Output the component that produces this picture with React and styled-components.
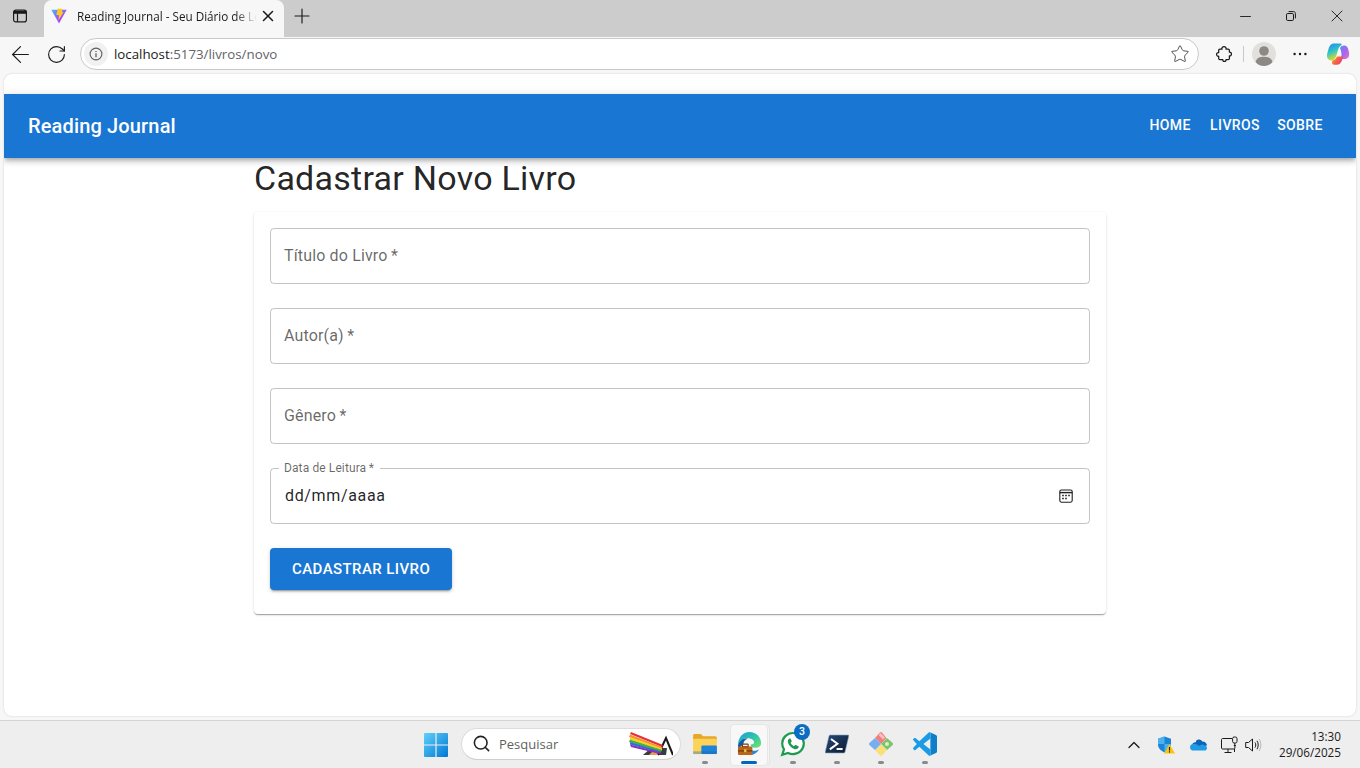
import React from 'react'
import styled, { createGlobalStyle } from 'styled-components'
import { ArrowLeft, RotateCw, Star, Minus, X, Plus, Search, ChevronUp } from 'lucide-react'

const GlobalStyle = createGlobalStyle`
    html, body { margin: 0; padding: 0; height: 100%; overflow: hidden; }
    body { font-family: Roboto, "Liberation Sans", sans-serif; background: #f7f7f7; }
    * { box-sizing: border-box; }
`

const fields = ['Título do Livro', 'Autor(a)', 'Gênero']
const navLinks = ['Home', 'Livros', 'Sobre']

const ViteIcon = () => (
    <svg width="16" height="16" viewBox="0 0 16 16">
        <defs>
            <linearGradient id="vite-a" x1="0" y1="0" x2="1" y2="1">
                <stop offset="0" stopColor="#41b8ff" />
                <stop offset="0.6" stopColor="#a24bfa" />
                <stop offset="1" stopColor="#bd34fe" />
            </linearGradient>
        </defs>
        <path d="M0.3 1.8 L15.7 1.8 L8 15.5 Z" fill="url(#vite-a)" />
        <path d="M7 0.5 L12 1 L10.8 4 L12.6 4 L7.4 12.5 L8 7.2 L5.2 6.8 Z" fill="#ffc81f" />
    </svg>
)

const SidebarIcon = () => (
    <svg width="16" height="16" viewBox="0 0 16 16" fill="none" stroke="#1a1a1a" strokeWidth="1.2">
        <rect x="1.6" y="2.1" width="12.8" height="11.8" rx="2.2" />
        <path d="M1.6 5.2 H14.4" />
        <path d="M5.5 5.2 V13.9" />
        <path d="M2 3 H14 V5 H2 Z" fill="#1a1a1a" stroke="none" />
    </svg>
)

const RestoreIcon = () => (
    <svg width="10" height="10" viewBox="0 0 10 10" fill="none" stroke="#1a1a1a" strokeWidth="1">
        <rect x="0.5" y="2.5" width="7" height="7" rx="1.3" />
        <path d="M2.6 0.6 H7.6 C8.6 0.6 9.4 1.4 9.4 2.4 V7.4" />
    </svg>
)

const InfoIcon = () => (
    <svg width="14" height="14" viewBox="0 0 14 14" fill="none" stroke="#5f5f5f" strokeWidth="1.1">
        <circle cx="7" cy="7" r="5.9" />
        <path d="M7 6.2 V10.2" strokeWidth="1.3" />
        <path d="M7 3.9 V5" strokeWidth="1.3" />
    </svg>
)

const PuzzleIcon = () => (
    <svg width="16" height="16" viewBox="0 0 16 16" fill="none" stroke="#1a1a1a" strokeWidth="1.25" strokeLinejoin="round">
        <path d="M6 3.2 C5.6 1.8 6.6 .7 8 .7 C9.4 .7 10.4 1.8 10 3.2 H12.2 C12.9 3.2 13.4 3.7 13.4 4.4 V6.2 C14.6 5.9 15.4 6.8 15.4 8 C15.4 9.2 14.6 10.1 13.4 9.8 V12.4 C13.4 13.1 12.9 13.6 12.2 13.6 H10 C10.2 14.8 9.4 15.4 8.4 15.4 C7.4 15.4 6.6 14.8 6.8 13.6 H3.9 C3.2 13.6 2.7 13.1 2.7 12.4 V10.2 C1.5 10.5 .6 9.6 .6 8.4 C.6 7.2 1.5 6.3 2.7 6.6 V4.4 C2.7 3.7 3.2 3.2 3.9 3.2 Z" />
    </svg>
)

const AvatarIcon = () => (
    <svg width="24" height="24" viewBox="0 0 24 24">
        <circle cx="12" cy="12" r="12" fill="#e2e0dd" />
        <circle cx="12" cy="9" r="4.8" fill="#8c8985" />
        <path d="M3.6 20 C4.4 16 8 14.8 12 14.8 C16 14.8 19.6 16 20.4 20 C18.4 22.6 15.4 24 12 24 C8.6 24 5.6 22.6 3.6 20 Z" fill="#8c8985" />
    </svg>
)

const DotsIcon = () => (
    <svg width="16" height="16" viewBox="0 0 16 16" fill="#1a1a1a">
        <circle cx="2.6" cy="8" r="1.2" />
        <circle cx="8" cy="8" r="1.2" />
        <circle cx="13.4" cy="8" r="1.2" />
    </svg>
)

const CopilotIcon = () => (
    <svg width="24" height="24" viewBox="0 0 24 24">
        <defs>
            <linearGradient id="cop-a" x1="0.2" y1="0" x2="0.6" y2="1">
                <stop offset="0" stopColor="#1f8df0" />
                <stop offset="0.45" stopColor="#2fc4c8" />
                <stop offset="0.8" stopColor="#b5d94a" />
                <stop offset="1" stopColor="#ffc83d" />
            </linearGradient>
            <linearGradient id="cop-b" x1="0" y1="0" x2="1" y2="1">
                <stop offset="0" stopColor="#5a8cf5" />
                <stop offset="0.5" stopColor="#a467f0" />
                <stop offset="1" stopColor="#ee6fc0" />
            </linearGradient>
            <linearGradient id="cop-c" x1="0" y1="0" x2="1" y2="0.6">
                <stop offset="0" stopColor="#ffb52e" />
                <stop offset="0.55" stopColor="#f5603c" />
                <stop offset="1" stopColor="#e8408a" />
            </linearGradient>
        </defs>
        <path d="M8 1.5 H14.5 C15.5 1.5 16 2.5 15.4 3.2 C13.6 4 12.6 5.6 12 8 L10.4 13.4 C9.6 16 8.4 18 5.8 18.4 C3 18.6 1 17 1 14 C1 12 1.6 9.8 2.4 7.4 C3.4 3.8 5 1.5 8 1.5 Z" fill="url(#cop-a)" />
        <path d="M14 6 C15 4.4 16.4 3.6 18.2 3.6 C20.6 3.6 21.8 5.4 22.4 8 C23.2 10.6 23.4 12.6 22.8 14.4 C22 16.4 20 17 18 17 H13.4 C15.4 16 15.8 13.4 15.4 11 C15.1 9.2 14.6 7.4 14 6 Z" fill="url(#cop-b)" />
        <path d="M6.4 18.6 C8.6 18.2 10 16.8 11 14.6 H17 C16.6 17.6 15.4 20.4 13.8 21.8 C12.8 22.6 11.6 22.8 10.4 22.8 H8.4 C6.8 22.8 6 21.8 6 20.8 Z" fill="url(#cop-c)" />
    </svg>
)

const CalendarIcon = () => (
    <svg width="14" height="14" viewBox="0 0 14 14" fill="none" stroke="#1f1f1f" strokeWidth="1.1">
        <rect x="0.8" y="1" width="12.4" height="12.2" rx="1.6" />
        <path d="M0.8 3.6 H13.2" strokeWidth="1.4" />
        <path d="M3.2 6.6 h1.6 M6.2 6.6 h1.6 M9.2 6.6 h1.6 M3.2 9.4 h1.6 M6.2 9.4 h1.6" strokeWidth="1.5" />
    </svg>
)

const WindowsLogo = () => (
    <svg width="24" height="24" viewBox="0 0 24 24">
        <defs>
            <linearGradient id="win-a" x1="0" y1="0" x2="1" y2="1">
                <stop offset="0" stopColor="#5fd0fb" />
                <stop offset="1" stopColor="#0078d4" />
            </linearGradient>
        </defs>
        <path d="M0 1 a1 1 0 0 1 1-1 H11.4 V11.4 H0 Z M12.6 0 H23 a1 1 0 0 1 1 1 V11.4 H12.6 Z M0 12.6 H11.4 V24 H1 a1 1 0 0 1-1-1 Z M12.6 12.6 H24 V23 a1 1 0 0 1-1 1 H12.6 Z" fill="url(#win-a)" />
    </svg>
)

const PrismIcon = () => (
    <svg width="44" height="24" viewBox="0 0 44 24">
        <path d="M29 23 L37 6 L44 23" fill="#fff" stroke="#1a1a1a" strokeWidth="2" />
        <path d="M14 23 L22 16 L38 16 L37 23 Z" fill="#1a1a1a" opacity="0.85" />
        <path d="M20 23 L26 17 L29 23" fill="#e8a04c" />
        <path d="M1 2 L2 0 L34 13 L33 15 Z" fill="#e8303a" />
        <path d="M0 5 L1 2.4 L33 15 L33 17 Z" fill="#f4932f" />
        <path d="M1 7.5 L1 5 L33 16.4 L33 18.5 Z" fill="#f5d327" />
        <path d="M0 10 L1 7.5 L33 18 L32 20 Z" fill="#4caf3c" />
        <path d="M1 12.5 L1 10 L32 19.4 L32 21 Z" fill="#2a6fdc" />
        <path d="M2 15 L1 12.5 L32 20.6 L31 22 Z" fill="#8a2fc0" />
    </svg>
)

const FolderIcon = () => (
    <svg width="24" height="22" viewBox="0 0 26 24">
        <path d="M0 2.6 C0 1.6 .8 1 1.6 1 H8.4 L11 3.6 H24 C25 3.6 26 4.4 26 5.4 V9 H0 Z" fill="#e9a727" />
        <path d="M0 6.4 H26 V21.4 C26 22.4 25 23 24 23 H2 C1 23 0 22.4 0 21.4 Z" fill="#fcd35a" />
        <rect x="9" y="13.6" width="17" height="9.4" rx="1.4" fill="#1e84d8" />
        <rect x="0" y="20" width="26" height="3" fill="#0f5fae" opacity="0.35" />
    </svg>
)

const EdgeIcon = () => (
    <svg width="25" height="25" viewBox="0 0 26 26">
        <defs>
            <linearGradient id="edge-a" x1="0" y1="0" x2="1" y2="1">
                <stop offset="0" stopColor="#1a9bd8" />
                <stop offset="0.55" stopColor="#31c8a8" />
                <stop offset="1" stopColor="#7be36a" />
            </linearGradient>
        </defs>
        <path d="M13 1 C20 1 25 6.4 25 12.4 C25 16 22 17.6 19 17.4 C16 17.2 14 16 14 14 C18 14.4 18.8 11.6 16.6 9.4 C14 6.8 8 6.6 4.2 9.8 C2.6 11.2 1.4 13 1 15 C1 7 6 1 13 1 Z" fill="url(#edge-a)" />
        <path d="M1 15 C2 10 7 7 11 8 C8 9 6.6 11.2 6.6 14 L1.6 18 Z" fill="#0c5fa8" />
        <path d="M14 20 C17 21 20.4 20.8 23 19 C21 23 17 25 14 25 Z" fill="#2a86d8" />
        <rect x="1" y="16" width="15" height="9" rx="1.2" fill="#b9651a" />
        <rect x="1" y="20" width="15" height="1.4" fill="#7a3d0c" />
        <rect x="5.6" y="13.6" width="6" height="2.8" rx="0.6" fill="none" stroke="#7a3d0c" strokeWidth="1.2" />
        <rect x="7.4" y="19" width="2.4" height="3" fill="#f2c14a" />
    </svg>
)

const WhatsAppIcon = () => (
    <svg width="26" height="26" viewBox="0 0 26 26" fill="none">
        <path d="M13 2 C7 2 2.2 6.8 2.2 12.6 C2.2 14.8 2.9 16.8 4 18.4 L2.2 23.8 L8 22 C9.5 22.8 11.2 23.2 13 23.2 C19 23.2 23.8 18.4 23.8 12.6 C23.8 6.8 19 2 13 2 Z" stroke="#1f9a52" strokeWidth="2.2" fill="#fff" />
        <path d="M9.4 7.6 C8.2 8.4 7.4 10 8 11.8 C9 14.6 11.4 17 14.2 18 C16 18.6 17.8 18 18.6 16.6 C18.8 16 18.8 15.4 18.4 15.2 L15.8 14 C15.4 13.8 15 14 14.8 14.2 L14 15.2 C12.4 14.6 11.2 13.4 10.6 11.8 L11.4 11 C11.8 10.6 11.8 10.2 11.6 9.8 L10.6 7.8 C10.4 7.4 9.8 7.4 9.4 7.6 Z" fill="#1f9a52" />
    </svg>
)

const PowerShellIcon = () => (
    <svg width="24" height="20" viewBox="0 0 24 20">
        <defs>
            <linearGradient id="ps-a" x1="0" y1="0" x2="1" y2="1">
                <stop offset="0" stopColor="#254a78" />
                <stop offset="1" stopColor="#0c1a30" />
            </linearGradient>
        </defs>
        <path d="M5 1 H23 C23.6 1 24 1.4 23.8 2 L20 18 C19.8 18.6 19.4 19 18.8 19 H1 C.4 19 0 18.6 .2 18 L4 2 C4.2 1.4 4.5 1 5 1 Z" fill="url(#ps-a)" stroke="#8aa8c8" strokeWidth="0.6" />
        <path d="M6 5 L12.4 9.8 L4.8 15.4" fill="none" stroke="#fff" strokeWidth="2" />
        <path d="M11.6 15 H17.6" stroke="#fff" strokeWidth="2" />
    </svg>
)

const GemIcon = () => (
    <svg width="26" height="26" viewBox="0 0 26 26">
        <path d="M13 13 L7 7 L12 1.6 C12.6 1 13.4 1 14 1.6 L18.4 7 Z" fill="#f07f7f" />
        <path d="M10.6 4 L15 8.4 L17 6.4 L12.6 2 Z" fill="#f7c0c0" />
        <path d="M13 13 L19 7 L24.6 12 C25.2 12.6 25.2 13.4 24.6 14 L19 19 Z" fill="#7cc36a" />
        <circle cx="19" cy="13" r="2" fill="#d8efd0" />
        <path d="M13 13 L19 19 L14 24.4 C13.4 25 12.6 25 12 24.4 L7 19 Z" fill="#fbdf78" />
        <path d="M13 13 L7 19 L1.4 14 C.8 13.4 .8 12.6 1.4 12 L7 7 Z" fill="#78aef0" />
    </svg>
)

const VSCodeIcon = () => (
    <svg width="24" height="24" viewBox="0 0 24 24">
        <path d="M17.4 0.4 L23 3 C23.6 3.3 24 3.9 24 4.6 V19.4 C24 20.1 23.6 20.7 23 21 L17.4 23.6 C16.8 23.9 16.2 23.8 15.7 23.4 C16.6 24 17.4 23.4 17.4 22.6 Z" fill="#0d7fcb" />
        <path d="M17.4 0.4 C16.8 0.1 16.2 0.2 15.7 0.6 L6.4 9.2 L2.4 6.1 C2 5.8 1.5 5.8 1.1 6.1 L0.3 6.9 C-0.1 7.3 -0.1 7.9 0.3 8.3 L3.8 12 L0.3 15.7 C-0.1 16.1 -0.1 16.7 0.3 17.1 L1.1 17.9 C1.5 18.2 2 18.2 2.4 17.9 L6.4 14.8 L15.7 23.4 C16.2 23.8 16.8 23.9 17.4 23.6 V17.6 L10.4 12 L17.4 6.4 Z" fill="#1a9be6" />
    </svg>
)

const ShieldIcon = () => (
    <svg width="18" height="18" viewBox="0 0 18 18">
        <path d="M7.5 0.6 L14 2.8 V8.6 C14 12.4 11 15 7.5 16.4 C4 15 1 12.4 1 8.6 V2.8 Z" fill="#1b86d8" />
        <path d="M7.5 0.6 V8 H1 V2.8 Z M14 8 V8.6 C14 12.4 11 15 7.5 16.4 V8 Z" fill="#4fb0ee" />
        <path d="M12.5 8 L18 17.6 H7 Z" fill="#f9c412" />
        <path d="M12.5 11 V14.4 M12.5 15.2 V16.4" stroke="#1a1a1a" strokeWidth="1.1" />
    </svg>
)

const CloudIcon = () => (
    <svg width="17" height="12" viewBox="0 0 17 12">
        <path d="M6.8 1 C8.6 0 11 .4 12.2 2.4 C14.8 2.2 17 4 17 6.4 L9 8 L2.2 5.4 C2.8 3.8 4.4 3 5.8 3.2 C6 2.2 6.4 1.4 6.8 1 Z" fill="#0a64b8" />
        <path d="M3 5 C1.2 5.2 0 6.6 0 8.2 C0 10.2 1.6 11.6 3.4 11.6 H14.6 C16 11.6 17 10.4 17 9 C17 7.6 16 6.6 14.6 6.4 C13 5 10.4 5.6 9.6 7 C7.8 5.4 5.4 4.8 3 5 Z" fill="#1f9be6" />
    </svg>
)

const NetworkIcon = () => (
    <svg width="18" height="18" viewBox="0 0 18 18" fill="none" stroke="#1a1a1a" strokeWidth="1">
        <path d="M11 2.5 H1.5 C1 2.5 .5 3 .5 3.5 V12 C.5 12.5 1 13 1.5 13 H13 C13.5 13 13.9 12.5 13.9 12 V9" />
        <path d="M7 13 V16 M3.5 16.5 H10.5 M13.5 13 V16" />
        <rect x="11.6" y="1" width="4.4" height="6" rx="1.6" />
        <path d="M13.8 7 V9.5 M12.8 9.5 H14.8" />
    </svg>
)

const VolumeIcon = () => (
    <svg width="18" height="18" viewBox="0 0 18 18" fill="none" stroke="#1a1a1a" strokeWidth="1">
        <path d="M.7 6.5 H3.5 L7.5 3 V15 L3.5 11.5 H.7 Z" />
        <path d="M10 6.4 C11 8 11 10 10 11.6" />
        <path d="M12 4.8 C13.6 7.2 13.6 10.8 12 13.2" />
        <path d="M14 3 C16.4 6.6 16.4 11.4 14 15" stroke="#b5b5b5" />
    </svg>
)

const taskItems = [
    { id: 'folder', icon: <FolderIcon /> },
    { id: 'edge', icon: <EdgeIcon />, active: true },
    { id: 'whatsapp', icon: <WhatsAppIcon />, badge: 3 },
    { id: 'powershell', icon: <PowerShellIcon /> },
    { id: 'gem', icon: <GemIcon /> },
    { id: 'vscode', icon: <VSCodeIcon /> },
]

export default function App() {
    return (
        <Screen>
            <GlobalStyle />
            <TabStrip>
                <SidebarBtn><SidebarIcon /></SidebarBtn>
                <Tab>
                    <ViteIcon />
                    <TabTitle>Reading Journal - Seu Diário de Leitura</TabTitle>
                    <X size={18} strokeWidth={2} color="#1a1a1a" />
                </Tab>
                <NewTab><Plus size={24} strokeWidth={1.15} color="#1a1a1a" /></NewTab>
                <WindowControls>
                    <WinBtn><Minus size={17} strokeWidth={1.3} color="#1a1a1a" /></WinBtn>
                    <WinBtn><RestoreIcon /></WinBtn>
                    <WinBtn><X size={20} strokeWidth={1.1} color="#1a1a1a" /></WinBtn>
                </WindowControls>
            </TabStrip>

            <Toolbar>
                <ToolBtn><ArrowLeft size={27} strokeWidth={1} color="#1a1a1a" /></ToolBtn>
                <ToolBtn><RotateCw size={21} strokeWidth={1.3} color="#1a1a1a" /></ToolBtn>
                <Omnibox>
                    <SiteInfo><InfoIcon /></SiteInfo>
                    <Url>localhost<UrlDim>:5173/livros/novo</UrlDim></Url>
                    <Star size={20} strokeWidth={1.1} color="#444" />
                </Omnibox>
                <ToolRight>
                    <PuzzleIcon />
                    <Divider />
                    <AvatarIcon />
                    <DotsSlot><DotsIcon /></DotsSlot>
                    <CopilotIcon />
                </ToolRight>
            </Toolbar>

            <Viewport>
                <AppBar>
                    <Brand>Reading Journal</Brand>
                    <Nav>
                        {navLinks.map((link) => <NavButton key={link}>{link}</NavButton>)}
                    </Nav>
                </AppBar>
                <Container>
                    <PageTitle>Cadastrar Novo Livro</PageTitle>
                    <Paper>
                        {fields.map((name) => (
                            <Field key={name}>
                                <FieldLabel>{name}{'\u2009*'}</FieldLabel>
                            </Field>
                        ))}
                        <Field>
                            <FloatingLabel>Data de Leitura{'\u2009*'}</FloatingLabel>
                            <DateValue>dd/mm/aaaa</DateValue>
                            <CalendarIcon />
                        </Field>
                        <SubmitButton>Cadastrar Livro</SubmitButton>
                    </Paper>
                </Container>
            </Viewport>

            <Taskbar>
                <StartBtn><WindowsLogo /></StartBtn>
                <SearchBox>
                    <Search size={19} strokeWidth={2} color="#222" />
                    <SearchText>Pesquisar</SearchText>
                    <PrismIcon />
                </SearchBox>
                <TaskItems>
                    {taskItems.map((item) => (
                        <TaskItem key={item.id} $active={item.active}>
                            {item.icon}
                            {item.badge && <Badge>{item.badge}</Badge>}
                            <RunDot $active={item.active} />
                        </TaskItem>
                    ))}
                </TaskItems>
                <Tray>
                    <TraySlot><ChevronUp size={20} strokeWidth={1.5} color="#1a1a1a" /></TraySlot>
                    <TraySlot><ShieldIcon /></TraySlot>
                    <TraySlot><CloudIcon /></TraySlot>
                    <NetIcons>
                        <NetworkIcon />
                        <VolumeIcon />
                    </NetIcons>
                    <Clock>
                        <span>13:30</span>
                        <span>29/06/2025</span>
                    </Clock>
                </Tray>
            </Taskbar>
        </Screen>
    )
}

const Screen = styled.div`
    position: relative;
    width: 1360px;
    height: 768px;
    display: flex;
    flex-direction: column;
    background: #f7f7f7;
    overflow: hidden;
`
const TabStrip = styled.div`
    height: 37px;
    flex: none;
    background: #cccccc;
    display: flex;
    align-items: flex-start;
`
const SidebarBtn = styled.div`
    width: 44px;
    height: 32px;
    display: flex;
    align-items: center;
    justify-content: center;
    padding-right: 4px;
`
const Tab = styled.div`
    width: 240px;
    height: 37px;
    background: #f7f7f7;
    border-radius: 8px 8px 0 0;
    display: flex;
    align-items: center;
    gap: 10px;
    padding: 0 7px 5px 7px;
    svg { flex: none; }
    svg:last-child { margin-left: -8px; }
`
const TabTitle = styled.span`
    flex: 1;
    min-width: 0;
    font: 11.7px/16px "Open Sans", "Noto Sans", sans-serif;
    color: #1a1a1a;
    white-space: nowrap;
    overflow: hidden;
    -webkit-mask-image: linear-gradient(to right, #000 88%, transparent 100%);
    mask-image: linear-gradient(to right, #000 88%, transparent 100%);
`
const NewTab = styled.div`
    width: 36px;
    height: 32px;
    display: flex;
    align-items: center;
    justify-content: center;
`
const WindowControls = styled.div`
    margin-left: auto;
    display: flex;
`
const WinBtn = styled.div`
    width: 46px;
    height: 32px;
    display: flex;
    align-items: center;
    justify-content: center;
`
const Toolbar = styled.div`
    height: 37px;
    flex: none;
    display: flex;
    align-items: center;
    padding: 0 10px 3px 2px;
`
const ToolBtn = styled.div`
    width: 36px;
    flex: none;
    height: 32px;
    display: flex;
    align-items: center;
    justify-content: center;
`
const Omnibox = styled.div`
    width: 1119px;
    flex: none;
    height: 32px;
    margin-left: 6px;
    background: #fff;
    border: 1px solid #c9c9c9;
    border-radius: 16px;
    display: flex;
    align-items: center;
    padding: 0 8px 0 3px;
`
const SiteInfo = styled.div`
    width: 24px;
    height: 24px;
    border-radius: 50%;
    background: #f1f1f1;
    display: flex;
    align-items: center;
    justify-content: center;
`
const Url = styled.span`
    flex: 1;
    margin-left: 6px;
    font: 13.3px "Open Sans", "Noto Sans", sans-serif;
    color: #1a1a1a;
`
const UrlDim = styled.span`
    color: #5f6368;
`
const ToolRight = styled.div`
    flex: 1;
    display: flex;
    align-items: center;
    padding-left: 17px;
`
const Divider = styled.div`
    width: 1px;
    height: 16px;
    background: #c8c8c8;
    margin: 0 8px 0 11px;
`
const DotsSlot = styled.div`
    margin: 0 18px 0 16px;
    display: flex;
`
const Viewport = styled.main`
    height: 642px;
    flex: none;
    margin: 0 4px;
    padding-top: 20px;
    background: #fff;
    border-radius: 8px;
    box-shadow: 0 0 2px rgba(0, 0, 0, 0.18);
    overflow: hidden;
`
const AppBar = styled.header`
    height: 64px;
    background: #1976d2;
    color: #fff;
    display: flex;
    align-items: center;
    justify-content: space-between;
    padding: 0 24px;
    box-shadow: 0 2px 4px -1px rgba(0, 0, 0, 0.2), 0 4px 5px 0 rgba(0, 0, 0, 0.14), 0 1px 10px 0 rgba(0, 0, 0, 0.12);
    position: relative;
`
const Brand = styled.div`
    font-size: 20px;
    font-weight: 500;
    letter-spacing: 0.15px;
`
const Nav = styled.nav`
    display: flex;
`
const NavButton = styled.button`
    min-width: 64px;
    padding: 5px 8px 7px;
    border: 0;
    background: none;
    color: inherit;
    font: 500 14px/24.5px Roboto, sans-serif;
    letter-spacing: 0.4px;
    text-transform: uppercase;
`
const Container = styled.div`
    width: 852px;
    margin: 0 auto;
`
const PageTitle = styled.h1`
    margin: 0 0 14px;
    font-size: 34px;
    line-height: 40px;
    font-weight: 400;
    letter-spacing: 0.25px;
    color: rgba(0, 0, 0, 0.87);
`
const Paper = styled.div`
    padding: 16px 16px 24px;
    background: #fff;
    border-radius: 4px;
    box-shadow: 0 2px 1px -1px rgba(0, 0, 0, 0.2), 0 1px 1px 0 rgba(0, 0, 0, 0.14), 0 1px 3px 0 rgba(0, 0, 0, 0.12);
    display: flex;
    flex-direction: column;
    align-items: flex-start;
    gap: 24px;
`
const Field = styled.div`
    position: relative;
    width: 100%;
    height: 56px;
    border: 1px solid rgba(0, 0, 0, 0.23);
    border-radius: 4px;
    display: flex;
    align-items: center;
    justify-content: space-between;
    padding: 0 16px 0 13px;
`
const FieldLabel = styled.label`
    font-size: 16px;
    letter-spacing: 0.15px;
    color: rgba(0, 0, 0, 0.6);
    padding-bottom: 2px;
`
const FloatingLabel = styled.label`
    position: absolute;
    left: 8px;
    top: -9px;
    padding: 0 6px 0 5px;
    background: #fff;
    font-size: 12px;
    line-height: 16px;
    letter-spacing: 0.11px;
    color: rgba(0, 0, 0, 0.6);
`
const DateValue = styled.span`
    font-size: 16px;
    letter-spacing: 0.65px;
    color: rgba(0, 0, 0, 0.87);
    padding: 0 0 2px 1px;
`
const SubmitButton = styled.button`
    height: 42px;
    padding: 8px 22px;
    border: 0;
    border-radius: 4px;
    background: #1976d2;
    color: #fff;
    font: 500 15px/26px Roboto, sans-serif;
    letter-spacing: 0.42px;
    text-transform: uppercase;
    box-shadow: 0 3px 1px -2px rgba(0, 0, 0, 0.2), 0 2px 2px 0 rgba(0, 0, 0, 0.14), 0 1px 5px 0 rgba(0, 0, 0, 0.12);
`
const Taskbar = styled.footer`
    position: absolute;
    left: 0;
    right: 0;
    top: 720px;
    height: 48px;
    background: #eeeeee;
    border-top: 1px solid #d4d4d4;
    display: flex;
    align-items: center;
    padding-left: 424px;
`
const StartBtn = styled.div`
    display: flex;
    margin-right: 13px;
`
const SearchBox = styled.div`
    width: 220px;
    height: 32px;
    margin-top: -2px;
    margin-right: 2px;
    background: #fff;
    border: 1px solid #dcdcdc;
    border-bottom-color: #cfcfcf;
    border-radius: 16px;
    display: flex;
    align-items: center;
    padding: 0 7px 0 10px;
`
const SearchText = styled.span`
    flex: 1;
    margin-left: 8px;
    padding-top: 1px;
    font: 13px/17px "Open Sans", "Noto Sans", sans-serif;
    color: #5f5f5f;
`
const TaskItems = styled.div`
    display: flex;
`
const TaskItem = styled.div`
    position: relative;
    width: 44px;
    height: 40px;
    display: flex;
    align-items: center;
    justify-content: center;
    padding-bottom: 2px;
    &::before {
        content: '';
        display: ${(p) => (p.$active ? 'block' : 'none')};
        position: absolute;
        inset: 0 4px;
        z-index: 0;
        background: #f8f8f8;
        border-radius: 4px;
        box-shadow: 0 0 0 1px #e6e6e6, 2px 0 0 0 #f4f4f4, 3px 0 0 0 #e3e3e3;
    }
    svg { position: relative; }
`
const RunDot = styled.span`
    position: absolute;
    left: 50%;
    bottom: 1px;
    transform: translateX(-50%);
    width: ${(p) => (p.$active ? '16px' : '6px')};
    height: 3px;
    border-radius: 2px;
    background: ${(p) => (p.$active ? '#0067c0' : '#8a8a8a')};
`
const Badge = styled.span`
    position: absolute;
    top: -1px;
    right: 5px;
    width: 16px;
    height: 16px;
    border-radius: 50%;
    background: #0b6cc4;
    color: #fff;
    font: 500 10.5px/16px Roboto, sans-serif;
    text-align: center;
`
const Tray = styled.div`
    position: absolute;
    right: 19px;
    top: 0;
    bottom: 0;
    display: flex;
    align-items: center;
`
const TraySlot = styled.div`
    width: 32px;
    display: flex;
    justify-content: center;
`
const NetIcons = styled.div`
    display: flex;
    align-items: center;
    gap: 6px;
    margin-left: 7px;
`
const Clock = styled.div`
    display: flex;
    flex-direction: column;
    align-items: flex-end;
    gap: 1px;
    margin-left: 16px;
    width: 62px;
    font: 11.7px/15px "Open Sans", "Noto Sans", sans-serif;
    color: #1a1a1a;
`
